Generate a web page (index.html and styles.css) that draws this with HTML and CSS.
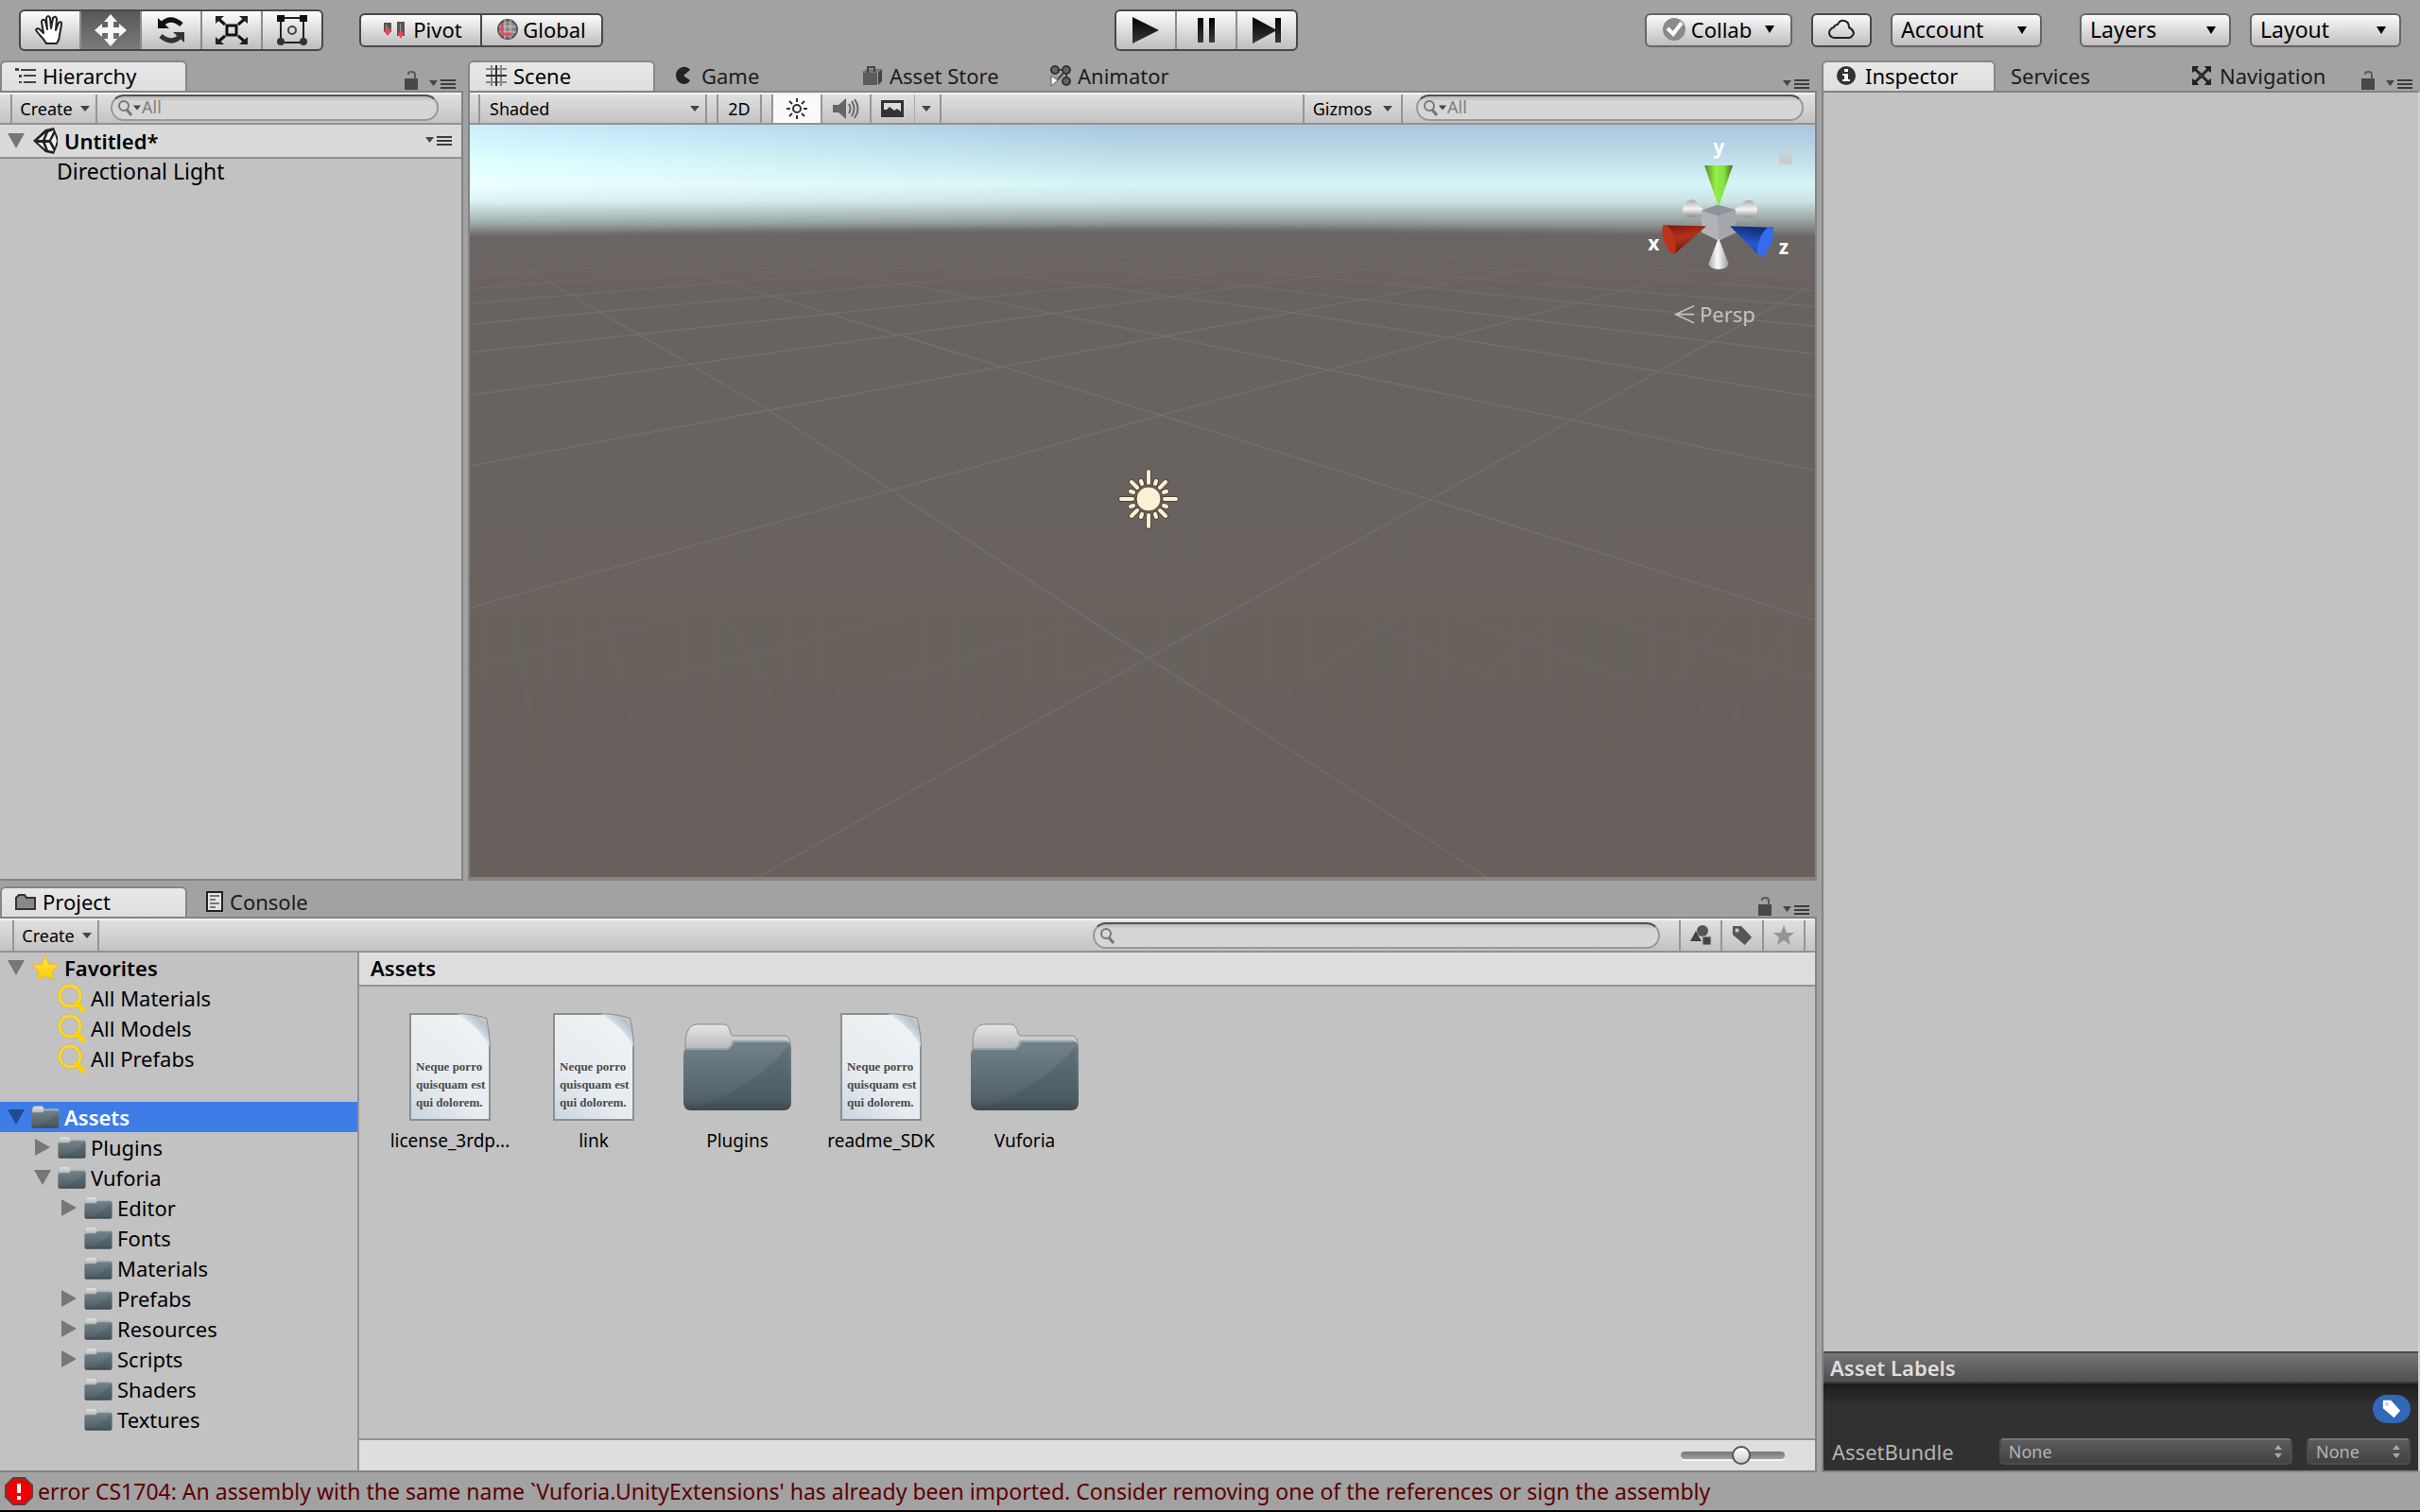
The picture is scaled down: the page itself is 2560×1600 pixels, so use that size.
FILE: index.html
```html
<!DOCTYPE html>
<html lang="en">
<head>
    <meta charset="UTF-8">
    <meta name="viewport" content="width=device-width, initial-scale=1.0">
    <title>Unity Editor</title>
    <link rel="stylesheet" href="styles.css">
</head>
<body>
    <!-- shared icons -->
    <svg class="defs" aria-hidden="true">
        <defs>
            <linearGradient id="folderFront" x1="0" y1="0" x2="0" y2="1">
                <stop offset="0" stop-color="#74838b"/>
                <stop offset="0.85" stop-color="#536067"/>
                <stop offset="1" stop-color="#3c474d"/>
            </linearGradient>
            <linearGradient id="folderBack" x1="0" y1="0" x2="0" y2="1">
                <stop offset="0" stop-color="#e6e6e6"/>
                <stop offset="0.4" stop-color="#aaaaaa"/>
            </linearGradient>
            <linearGradient id="gold" x1="0" y1="0" x2="0" y2="1">
                <stop offset="0" stop-color="#ffe245"/>
                <stop offset="1" stop-color="#ffce00"/>
            </linearGradient>
            <linearGradient id="paper" x1="0" y1="1" x2="0.6" y2="0">
                <stop offset="0" stop-color="#c9d4df"/>
                <stop offset="0.4" stop-color="#e6ebef"/>
                <stop offset="1" stop-color="#eef2f4"/>
            </linearGradient>
            <linearGradient id="curl" x1="0" y1="1" x2="1" y2="0">
                <stop offset="0.45" stop-color="#e9eef2"/>
                <stop offset="0.75" stop-color="#b4c2cd"/>
                <stop offset="1" stop-color="#d5dde3"/>
            </linearGradient>
            <linearGradient id="dark" x1="0" y1="0" x2="0" y2="1">
                <stop offset="0" stop-color="#000"/>
                <stop offset="1" stop-color="#3a3a3a"/>
            </linearGradient>
        </defs>
        <symbol id="lock" viewBox="0 0 14 20">
            <path d="M0 8h14v12H0z" fill="#474747"/>
            <path d="M4 4V3q0-2 3.500-2T11 4v5" fill="none" stroke="#5a5a5a" stroke-width="2"/>
        </symbol>
        <symbol id="menu" viewBox="0 0 28 12">
            <path d="M0 2h9L4.500 8z" fill="#474747"/>
            <path d="M12 2h16M12 6h16M12 10h16" stroke="#3c3c3c" stroke-width="2"/>
        </symbol>
        <symbol id="down" viewBox="0 0 18 16"><path d="M0 0h18L9 16z" fill="currentColor"/></symbol>
        <symbol id="right" viewBox="0 0 16 18"><path d="M0 0l16 9-16 9z" fill="currentColor"/></symbol>
        <symbol id="caret" viewBox="0 0 10 6"><path d="M0 0h10L5 6z" fill="#444"/></symbol>
        <symbol id="find" viewBox="0 0 16 18">
            <circle cx="6" cy="7" r="5" fill="none" stroke="#777" stroke-width="2"/>
            <path d="M9 11l5 6" stroke="#777" stroke-width="3"/>
        </symbol>
        <symbol id="folder" viewBox="0 0 116 94">
            <path d="M3 88V18Q5 3 14 2h30q5 0 7 10l2 2h54q6 0 7 7v67z" fill="url(#folderBack)" stroke="#8b8b8b" stroke-width="1"/>
            <path d="M1 34q0-6 5-6l41-1q4-1 6-8h54q8 1 8 8v57q0 9-8 9H9q-8 0-8-9z" fill="url(#folderFront)"/>
            <path d="M113 24v58q0 7-7 7H20q60-25 93-65z" fill="#2f4a52" opacity="0.25"/>
            <path d="M4 28h43q4-1 7-8h56" fill="none" stroke="#90a6b2" stroke-width="2"/>
        </symbol>
        <symbol id="lens" viewBox="0 0 30 30">
            <circle cx="13" cy="13" r="11" fill="none" stroke="#c79f1c" stroke-width="4" opacity="0.5"/>
            <circle cx="13" cy="13" r="11" fill="none" stroke="#ffd828" stroke-width="3"/>
            <path d="M20 21l7 7" stroke="#ffd200" stroke-width="5" stroke-linecap="round"/>
        </symbol>
        <symbol id="file" viewBox="0 0 88 116">
            <path d="M2 2h50q20 1 30 5 4 16 4 34v73H2z" fill="url(#paper)" stroke="#8a8f92" stroke-width="2"/>
            <path d="M52 2q20 1 30 5 3 13 4 30Q77 17 52 2z" fill="url(#curl)"/>
        </symbol>
        <symbol id="tag" viewBox="0 0 26 24">
            <path d="M2 1h10l12 13-8 9L2 11z" fill="currentColor"/>
            <rect class="hole" x="5" y="4" width="4" height="4"/>
        </symbol>
    </svg>

    <header class="topbar">
        <div class="top-left">
            <div class="group">
                <button class="tool" aria-label="Hand">
                    <svg width="34" height="34" viewBox="0 0 34 34"><path d="M13 31C11 27 9 25 6 22L2 17q1-3 4-1l4 4-2-12q1-4 4-1l2 9-1-12q2-4 4 0l1 11 2-11q3-3 4 1l-1 12 3-8q4-2 3 2l-2 11q0 5-3 9z" fill="#fff" stroke="#222" stroke-width="2" stroke-linejoin="round"/></svg>
                </button>
                <button class="tool active" aria-label="Move">
                    <svg width="36" height="36" viewBox="0 0 36 36"><path d="M18 1l7 8h-4v6h6v-4l8 7-8 7v-4h-6v6h4l-7 8-7-8h4v-6H9v4l-8-7 8-7v4h6V9h-4z" fill="#f6f6f6"/></svg>
                </button>
                <button class="tool" aria-label="Rotate">
                    <svg width="32" height="32" viewBox="0 0 32 32"><path d="M6 10Q15 0 27 10" fill="none" stroke="#111" stroke-width="5"/><path d="M2 3v11h12z" fill="#111"/><path d="M26 22Q17 32 5 22" fill="none" stroke="#333" stroke-width="5"/><path d="M30 29V18H18z" fill="#333"/></svg>
                </button>
                <button class="tool" aria-label="Scale">
                    <svg width="36" height="32" viewBox="0 0 36 32"><rect x="13" y="11" width="10" height="10" fill="none" stroke="#111" stroke-width="3"/><path d="M3 3l8 7M33 3l-8 7M3 29l8-7M33 29l-8-7" stroke="#111" stroke-width="3"/><path d="M1 1h9l-9 8zM35 1h-9l9 8zM1 31h9l-9-8zM35 31h-9l9-8z" fill="#222"/></svg>
                </button>
                <button class="tool" aria-label="Rect">
                    <svg width="34" height="34" viewBox="0 0 34 34"><path d="M5 4h24v26H5z" fill="none" stroke="#222" stroke-width="2"/><path d="M1 1h8v7H1zM25 1h8v7h-8z" fill="#111"/><circle cx="5" cy="29" r="4" fill="#333"/><circle cx="29" cy="29" r="4" fill="#333"/><circle cx="17" cy="17" r="4" fill="none" stroke="#444" stroke-width="2"/></svg>
                </button>
            </div>
            <div class="group small">
                <button class="pivot">
                    <svg width="24" height="20" viewBox="0 0 24 20"><path d="M1 3h8v10H1zM15 2h8v15h-8z" fill="#555"/><path d="M3 5h1v7H3zM18 4h1v9h-1z" fill="#999"/><path d="M5 7l4 5-4 5-4-5zM19 11l3 4-3 5-3-5z" fill="#e8485a"/></svg>
                    Pivot
                </button>
                <button class="global">
                    <svg width="22" height="22" viewBox="0 0 22 22"><circle cx="11" cy="11" r="10" fill="#888" stroke="#555" stroke-width="2"/><path d="M2 8h18M2 14h18M8 1v20M14 1v20" stroke="#ccc" stroke-width="1"/><path d="M5 5v11h10" fill="none" stroke="#e8485a" stroke-width="3"/></svg>
                    Global
                </button>
            </div>
        </div>
        <div class="group play">
            <button class="tool" aria-label="Play"><svg width="30" height="28" viewBox="0 0 30 28"><path d="M1 0l28 14L1 28z" fill="url(#dark)"/></svg></button>
            <button class="tool" aria-label="Pause"><svg width="20" height="28" viewBox="0 0 20 28"><path d="M1 1h6v26H1zM13 1h6v26h-6z" fill="url(#dark)"/></svg></button>
            <button class="tool" aria-label="Step"><svg width="30" height="28" viewBox="0 0 30 28"><path d="M0 0l24 13V1h6v26h-6V15L0 28z" fill="url(#dark)"/></svg></button>
        </div>
        <div class="top-right">
            <button class="pop collab">
                <svg width="24" height="24" viewBox="0 0 24 24"><circle cx="12" cy="12" r="12" fill="#8a8a8a"/><path d="M5 11l6 6 9-12" fill="none" stroke="#fff" stroke-width="4"/></svg>
                Collab
                <svg class="tri" width="10" height="8" viewBox="0 0 10 8"><path d="M0 0h10L5 8z"/></svg>
            </button>
            <button class="pop cloud" aria-label="Cloud">
                <svg width="30" height="22" viewBox="0 0 30 22"><path d="M7 20q-5-1-5-6 1-4 5-5 1-3 4-3 2-5 7-4 5 1 5 7 4 2 5 6-1 4-5 5z" fill="none" stroke="#222" stroke-width="2"/></svg>
            </button>
            <select class="pop" aria-label="Account"><option>Account</option></select>
            <select class="pop spaced" aria-label="Layers"><option>Layers</option></select>
            <select class="pop" aria-label="Layout"><option>Layout</option></select>
        </div>
    </header>

    <main class="workspace">
        <section class="panel hierarchy">
            <nav class="tabs">
                <button class="tab active">
                    <svg width="22" height="18" viewBox="0 0 22 18"><path d="M6 3h16M9 9h13M9 16h13" stroke="#444" stroke-width="2"/><path d="M0 1h4v3H0zM4 8h3v3H4zM4 15h3v2H4z" fill="#444"/></svg>
                    Hierarchy
                </button>
                <div class="tab-tools">
                    <svg width="14" height="20"><use href="#lock"/></svg>
                    <svg width="28" height="12"><use href="#menu"/></svg>
                </div>
            </nav>
            <div class="panel-body">
                <div class="toolbar">
                    <button class="bar-btn create">Create <svg width="10" height="6"><use href="#caret"/></svg></button>
                    <label class="search wide">
                        <svg width="16" height="18"><use href="#find"/></svg><svg width="8" height="6"><use href="#caret"/></svg>
                        <input type="text" placeholder="All" aria-label="Search hierarchy">
                    </label>
                </div>
                <div class="row scene-row">
                    <button class="toggle" aria-label="Collapse"><svg width="18" height="16"><use href="#down"/></svg></button>
                    <svg class="icon" width="30" height="30" viewBox="0 0 30 30"><path d="M2 15L15 3l9-2 4 10v8l-4 10-9-2z" fill="#222"/><path d="M7 14l8-7-3 7zM7 17h5l3 7zM18 6l6-2-5 10h-4zM18 25l-3-8h4l5 9zM25 8l2 7-2 7-4-7z" fill="#f4f4f4"/></svg>
                    <b>Untitled*</b>
                    <svg class="row-menu" width="28" height="12"><use href="#menu"/></svg>
                </div>
                <div class="row object">Directional Light</div>
            </div>
        </section>

        <section class="panel scene">
            <nav class="tabs">
                <button class="tab active">
                    <svg width="22" height="22" viewBox="0 0 22 22"><path d="M6 0v22M16 0v22M0 4h22M0 18h22" stroke="#888" stroke-width="2"/><path d="M11 0v22M0 11h22" stroke="#333" stroke-width="2"/></svg>
                    Scene
                </button>
                <button class="tab">
                    <svg width="22" height="20" viewBox="0 0 22 20"><path d="M17 4Q14 0 9 1 2 3 2 10t8 9q5 0 7-4l-7-5z" fill="#222"/></svg>
                    Game
                </button>
                <button class="tab">
                    <svg width="22" height="22" viewBox="0 0 22 22"><path d="M1 8h15v13H1z" fill="#5c5c5c"/><path d="M0 7l5-3h16l-4 4H0z" fill="#777"/><path d="M17 8l4-4v13l-4 4z" fill="#444"/><path d="M6 8V2h7v5" fill="none" stroke="#444" stroke-width="2"/></svg>
                    Asset Store
                </button>
                <button class="tab">
                    <svg width="22" height="22" viewBox="0 0 22 22"><path d="M5 5h12v12M17 5L8 15" fill="none" stroke="#444" stroke-width="2"/><circle cx="5" cy="5" r="4" fill="#666" stroke="#333" stroke-width="2"/><circle cx="17" cy="5" r="4" fill="#666" stroke="#333" stroke-width="2"/><circle cx="17" cy="17" r="4" fill="#666" stroke="#333" stroke-width="2"/><path d="M1 11l7 5-7 6z" fill="#fff" stroke="#555" stroke-width="1"/></svg>
                    Animator
                </button>
                <div class="tab-tools"><svg width="28" height="12"><use href="#menu"/></svg></div>
            </nav>
            <div class="panel-body">
                <div class="toolbar">
                    <select class="bar-select" aria-label="Draw mode"><option>Shaded</option></select>
                    <button class="bar-btn two-d">2D</button>
                    <button class="bar-btn square on" aria-label="Lighting">
                        <svg width="24" height="24" viewBox="-12 -12 24 24"><circle r="4" fill="none" stroke="#333" stroke-width="2"/><path d="M0-11v4M0 11V7M-11 0h4M11 0H7M-8-8l3 3M8-8L5-5M-8 8l3-3M8 8L5 5" stroke="#333" stroke-width="2"/></svg>
                    </button>
                    <button class="bar-btn square" aria-label="Audio">
                        <svg width="28" height="24" viewBox="0 0 28 24"><path d="M0 8h6l8-7v22l-8-7H0z" fill="#666"/><path d="M17 7q3 5 0 10M20 4q5 8 0 16M23 2q7 10 0 20" fill="none" stroke="#666" stroke-width="2"/></svg>
                    </button>
                    <button class="bar-btn effects" aria-label="Effects">
                        <svg width="24" height="18" viewBox="0 0 24 18"><path d="M0 0h24v18H0z" fill="#333"/><path d="M3 3h18v9l-4-3-3 2-5-4-3 3H3z" fill="#ddd"/></svg>
                        <svg class="split" width="10" height="6"><use href="#caret"/></svg>
                    </button>
                    <button class="bar-btn gizmos">Gizmos <svg width="10" height="6"><use href="#caret"/></svg></button>
                    <label class="search">
                        <svg width="16" height="18"><use href="#find"/></svg><svg width="8" height="6"><use href="#caret"/></svg>
                        <input type="text" placeholder="All" aria-label="Search scene">
                    </label>
                </div>
                <div class="viewport">
                    <svg class="world" viewBox="18 22 1538 1523" preserveAspectRatio="none">
                        <defs>
                            <linearGradient id="sky" x1="0" y1="0" x2="0" y2="1">
                                <stop offset="0" stop-color="#a9c6df"/>
                                <stop offset="0.25" stop-color="#bcd9e8"/>
                                <stop offset="0.53" stop-color="#d6f5f6"/>
                                <stop offset="0.68" stop-color="#cbe2e3"/>
                                <stop offset="0.86" stop-color="#94a09f"/>
                                <stop offset="1" stop-color="#6b6664"/>
                            </linearGradient>
                            <linearGradient id="skyLeft" x1="0" y1="0" x2="0" y2="1">
                                <stop offset="0" stop-color="#c9edff"/>
                                <stop offset="0.3" stop-color="#dcffff"/>
                                <stop offset="0.53" stop-color="#ecffff"/>
                                <stop offset="0.68" stop-color="#d9f3f3"/>
                                <stop offset="0.86" stop-color="#a3b2b1"/>
                                <stop offset="1" stop-color="#6b6664"/>
                            </linearGradient>
                            <linearGradient id="fade">
                                <stop offset="0" stop-color="#fff"/>
                                <stop offset="0.5" stop-color="#000"/>
                            </linearGradient>
                            <linearGradient id="ground" x1="0" y1="0" x2="0" y2="1">
                                <stop offset="0" stop-color="#6b6565"/>
                                <stop offset="0.1" stop-color="#696460"/>
                                <stop offset="1" stop-color="#68605a"/>
                            </linearGradient>
                            <linearGradient id="haze" x1="0" y1="0" x2="0" y2="1">
                                <stop offset="0" stop-color="#000"/>
                                <stop offset="0.12" stop-color="#fff"/>
                            </linearGradient>
                            <mask id="leftMask"><rect x="18" y="22" width="1538" height="240" fill="url(#fade)"/></mask>
                            <mask id="hazeMask" maskUnits="userSpaceOnUse" x="18" y="22" width="1538" height="1523"><rect x="18" y="260" width="1538" height="1285" fill="url(#haze)"/></mask>
                            <filter id="soft" x="-5%" y="-5%" width="110%" height="110%"><feGaussianBlur stdDeviation="3 7"/></filter>
                        </defs>
                        <rect x="18" y="240" width="1538" height="1305" fill="#6b6664"/>
                        <rect x="18" y="22" width="1538" height="228" fill="url(#sky)"/>
                        <rect x="18" y="22" width="1538" height="228" fill="url(#skyLeft)" mask="url(#leftMask)"/>
                        <path d="M-60 252Q787 212 1640 252V1640H-60z" fill="url(#ground)" filter="url(#soft)"/>
                        <g class="grid-lines" mask="url(#hazeMask)">
                            <path d="M10 240L360 600 795 1103 1181 1546M347 1546L1556 343M180 270L808 610 1556 1025M18 1000L808 610 1520 270M390 300L813 450 1556 722M18 713L813 450 1300 290M550 305L970 405 1556 573M18 570L1180 280"/>
                            <path d="M600 283L1556 486M18 483L950 306M700 280L1556 430M18 426L800 296M800 280L1556 390M18 384L700 284M900 276L1556 358M18 354L640 276M900 264L1556 330M18 328L560 262"/>
                            <path d="M18 900L500 700M18 1120L760 800M18 1250L900 830M18 1400L850 960M60 1546L1000 960M640 1546L1100 990M60 950L122 1546M160 940L250 1546M290 950L480 1546M600 1200L780 1546M1556 1150L950 820M1556 1280L900 860M1556 1430L960 960M920 1546L1280 980M1210 1546L1480 960M1350 1546L1540 1000" opacity="0.2"/>
                        </g>
                    </svg>
                    <svg class="sun" width="66" height="66" viewBox="-33 -33 66 66">
                        <g fill="none" stroke-linecap="round">
                            <path d="M0-29v12M0 29V17M-29 0h12M29 0H17M-18-18l6 6M18-18l-6 6M-18 18l6-6M18 18l-6-6M-8-19l1 3M8-19l-1 3M-8 19l1-3M8 19l-1-3M-19-8l3 1M19-8l-3 1M-19 8l3-1M19 8l-3-1" stroke="#4d463f" stroke-width="6"/>
                            <path d="M0-29v12M0 29V17M-29 0h12M29 0H17M-18-18l6 6M18-18l-6 6M-18 18l6-6M18 18l-6-6M-8-19l1 3M8-19l-1 3M-8 19l1-3M8 19l-1-3M-19-8l3 1M19-8l-3 1M-19 8l3-1M19 8l-3-1" stroke="#fdf0d3" stroke-width="4"/>
                        </g>
                        <circle r="13" fill="#fdf0d3" stroke="#4d463f" stroke-width="1"/>
                    </svg>
                    <svg class="axis" width="160" height="200" viewBox="180 75 480 600">
                        <defs>
                            <linearGradient id="green"><stop offset="0" stop-color="#4f8f22"/><stop offset="0.4" stop-color="#95f04a"/><stop offset="0.7" stop-color="#86e03e"/><stop offset="1" stop-color="#3d6d1c"/></linearGradient>
                            <linearGradient id="white"><stop offset="0" stop-color="#aaa"/><stop offset="0.45" stop-color="#fafafa"/><stop offset="1" stop-color="#999"/></linearGradient>
                            <linearGradient id="whiteV" x1="0" y1="0" x2="0" y2="1"><stop offset="0" stop-color="#aaa"/><stop offset="0.5" stop-color="#f4f4f6"/><stop offset="1" stop-color="#888"/></linearGradient>
                            <linearGradient id="red" x1="0" y1="0" x2="0.3" y2="1"><stop offset="0" stop-color="#701c10"/><stop offset="0.5" stop-color="#b43019"/><stop offset="1" stop-color="#6a1a0e"/></linearGradient>
                            <linearGradient id="blue" x1="0.3" y1="0" x2="0" y2="1"><stop offset="0" stop-color="#132f7c"/><stop offset="0.5" stop-color="#2858d2"/><stop offset="1" stop-color="#122a6c"/></linearGradient>
                        </defs>
                        <path d="M364 304L340 277Q310 264 300 305q2 22 22 26l42-5z" fill="url(#whiteV)"/>
                        <path d="M466 304l32-26q30-12 39 27-2 22-22 29l-49-9z" fill="url(#whiteV)"/>
                        <path d="M360 308l51-18 57 16v72l-54 26-54-26z" fill="#b2b3b7"/>
                        <path d="M360 308l51-18 57 16-54 20z" fill="#8f939b"/>
                        <path d="M411 326l57-20v72l-54 26z" fill="#a5a6aa"/>
                        <path d="M369 165h90l-43 125h-4z" fill="url(#green)"/>
                        <path d="M412 400h4l30 78q-6 17-32 17t-32-17z" fill="url(#white)"/>
                        <path d="M238 355l137 3-100 88z" fill="url(#red)"/>
                        <ellipse cx="257" cy="400" rx="17" ry="48" transform="rotate(-18 257 400)" fill="#bd321b"/>
                        <path d="M450 358l138 4-42 92z" fill="url(#blue)"/>
                        <ellipse cx="562" cy="408" rx="20" ry="50" transform="rotate(21 562 408)" fill="#356bec"/>
                        <path d="M606 131h42v31h-42z" fill="#c9cdcd"/>
                        <path d="M615 122q2-12 12-12 12 1 12 12v12" fill="none" stroke="#c9cdcd" stroke-width="5"/>
                        <path d="M336 611l-58 27 58 27M280 638h56" fill="none" stroke="#c4c2c0" stroke-width="5"/>
                        <g class="axis-name">
                            <text x="397" y="128">y</text>
                            <text x="190" y="434">x</text>
                            <text x="605" y="446">z</text>
                        </g>
                        <text class="persp" x="354" y="662">Persp</text>
                    </svg>
                </div>
            </div>
        </section>

        <section class="panel project">
            <nav class="tabs">
                <button class="tab active">
                    <svg width="22" height="18" viewBox="0 0 22 18"><path d="M1 17V5l3-3h6l2 3h9v12z" fill="#888" stroke="#333" stroke-width="2"/></svg>
                    Project
                </button>
                <button class="tab">
                    <svg width="18" height="22" viewBox="0 0 18 22"><path d="M1 1h16v20H1z" fill="#e3e3e3" stroke="#222" stroke-width="2"/><path d="M4 5h10M4 9h6M4 13h10M4 17h6" stroke="#777" stroke-width="2"/></svg>
                    Console
                </button>
                <div class="tab-tools">
                    <svg width="14" height="20"><use href="#lock"/></svg>
                    <svg width="28" height="12"><use href="#menu"/></svg>
                </div>
            </nav>
            <div class="panel-body">
                <div class="toolbar">
                    <button class="bar-btn create">Create <svg width="10" height="6"><use href="#caret"/></svg></button>
                    <label class="search">
                        <svg width="16" height="18"><use href="#find"/></svg>
                        <input type="text" aria-label="Search project">
                    </label>
                    <div class="filters">
                        <button class="bar-btn" aria-label="Filter by type"><svg width="24" height="22" viewBox="0 0 24 22"><circle cx="14" cy="6" r="6" fill="#555"/><path d="M7 6l6 11H1z" fill="#444"/><path d="M14 12h9v9h-9z" fill="#444" stroke="#bbb" stroke-width="1"/></svg></button>
                        <button class="bar-btn tag-btn" aria-label="Filter by label"><svg width="24" height="22"><use href="#tag"/></svg></button>
                        <button class="bar-btn" aria-label="Save search"><svg width="22" height="22" viewBox="0 0 22 22"><path d="M11 0l3 8h8l-6 5 2 8-7-5-7 5 2-8-6-5h8z" fill="#959595"/></svg></button>
                    </div>
                </div>
                <div class="browser">
                    <div class="tree">
                        <div class="row"><button class="toggle" aria-label="Collapse"><svg width="18" height="16"><use href="#down"/></svg></button><svg class="icon" width="30" height="28" viewBox="0 0 30 28"><path d="M15 1l4 9 10 1-7 7 2 9-9-4-9 4 2-9-7-7 10-1z" fill="url(#gold)" stroke="#e2b93a" stroke-width="1"/></svg><b>Favorites</b></div>
                        <div class="row level1"><span class="toggle"></span><svg class="icon" width="30" height="30"><use href="#lens"/></svg>All Materials</div>
                        <div class="row level1"><span class="toggle"></span><svg class="icon" width="30" height="30"><use href="#lens"/></svg>All Models</div>
                        <div class="row level1"><span class="toggle"></span><svg class="icon" width="30" height="30"><use href="#lens"/></svg>All Prefabs</div>
                        <div class="row selected"><button class="toggle" aria-label="Collapse"><svg width="18" height="16"><use href="#down"/></svg></button><svg class="icon" width="30" height="24"><use href="#folder"/></svg><b>Assets</b></div>
                        <div class="row level1"><button class="toggle" aria-label="Expand"><svg width="16" height="18"><use href="#right"/></svg></button><svg class="icon" width="30" height="24"><use href="#folder"/></svg>Plugins</div>
                        <div class="row level1"><button class="toggle" aria-label="Collapse"><svg width="18" height="16"><use href="#down"/></svg></button><svg class="icon" width="30" height="24"><use href="#folder"/></svg>Vuforia</div>
                        <div class="row level2"><button class="toggle" aria-label="Expand"><svg width="16" height="18"><use href="#right"/></svg></button><svg class="icon" width="30" height="24"><use href="#folder"/></svg>Editor</div>
                        <div class="row level2"><span class="toggle"></span><svg class="icon" width="30" height="24"><use href="#folder"/></svg>Fonts</div>
                        <div class="row level2"><span class="toggle"></span><svg class="icon" width="30" height="24"><use href="#folder"/></svg>Materials</div>
                        <div class="row level2"><button class="toggle" aria-label="Expand"><svg width="16" height="18"><use href="#right"/></svg></button><svg class="icon" width="30" height="24"><use href="#folder"/></svg>Prefabs</div>
                        <div class="row level2"><button class="toggle" aria-label="Expand"><svg width="16" height="18"><use href="#right"/></svg></button><svg class="icon" width="30" height="24"><use href="#folder"/></svg>Resources</div>
                        <div class="row level2"><button class="toggle" aria-label="Expand"><svg width="16" height="18"><use href="#right"/></svg></button><svg class="icon" width="30" height="24"><use href="#folder"/></svg>Scripts</div>
                        <div class="row level2"><span class="toggle"></span><svg class="icon" width="30" height="24"><use href="#folder"/></svg>Shaders</div>
                        <div class="row level2"><span class="toggle"></span><svg class="icon" width="30" height="24"><use href="#folder"/></svg>Textures</div>
                    </div>
                    <div class="contents">
                        <div class="crumbs"><b>Assets</b></div>
                        <div class="files">
                            <div class="file"><div class="doc"><svg width="88" height="116"><use href="#file"/></svg><p>Neque porro<br>quisquam est<br>qui dolorem.</p></div><span>license_3rdp...</span></div>
                            <div class="file"><div class="doc"><svg width="88" height="116"><use href="#file"/></svg><p>Neque porro<br>quisquam est<br>qui dolorem.</p></div><span>link</span></div>
                            <div class="file"><svg width="116" height="94"><use href="#folder"/></svg><span>Plugins</span></div>
                            <div class="file"><div class="doc"><svg width="88" height="116"><use href="#file"/></svg><p>Neque porro<br>quisquam est<br>qui dolorem.</p></div><span>readme_SDK</span></div>
                            <div class="file"><svg width="116" height="94"><use href="#folder"/></svg><span>Vuforia</span></div>
                        </div>
                        <div class="files-foot"><input class="zoom" type="range" min="0" max="100" value="60" aria-label="Icon size"></div>
                    </div>
                </div>
            </div>
        </section>

        <section class="panel inspector">
            <nav class="tabs">
                <button class="tab active">
                    <svg width="22" height="22" viewBox="0 0 22 22"><circle cx="11" cy="11" r="10" fill="#333"/><path d="M9 4h4v3H9zM7 9h6v6h2v2H7v-2h2v-4H7z" fill="#fff"/></svg>
                    Inspector
                </button>
                <button class="tab">Services</button>
                <button class="tab nav-tab">
                    <svg width="20" height="20" viewBox="0 0 20 20"><path d="M0 0h7L5 3l4 4-2 2-4-4-3 2zM20 0v7l-3-2-4 4-2-2 4-4-2-3zM0 20v-7l3 2 4-4 2 2-4 4 2 3zM20 20h-7l2-3-4-4 2-2 4 4 3-2z" fill="#222"/><path d="M7 7h6v6H7z" fill="#333"/></svg>
                    Navigation
                </button>
                <div class="tab-tools">
                    <svg width="14" height="20"><use href="#lock"/></svg>
                    <svg width="28" height="12"><use href="#menu"/></svg>
                </div>
            </nav>
            <div class="panel-body">
                <div class="labels-head"><b>Asset Labels</b></div>
                <div class="labels-body">
                    <button class="badge" aria-label="Labels"><svg width="22" height="20"><use href="#tag"/></svg></button>
                    <div class="bundle">
                        <label for="bundle">AssetBundle</label>
                        <select id="bundle"><option>None</option></select>
                        <select class="variant" aria-label="Variant"><option>None</option></select>
                    </div>
                </div>
            </div>
        </section>
    </main>

    <footer class="status">
        <svg width="30" height="30" viewBox="0 0 30 30"><path d="M9 1h12l8 8v12l-8 8H9l-8-8V9z" fill="#f00000" stroke="#6b3a3a" stroke-width="2"/><path d="M13 7h4v10h-4zM13 20h4v4h-4z" fill="#fff"/></svg>
        error CS1704: An assembly with the same name `Vuforia.UnityExtensions' has already been imported. Consider removing one of the references or sign the assembly
    </footer>
</body>
</html>
```
FILE: styles.css
```css
*, *::before, *::after {
    box-sizing: border-box;
}
body {
    margin: 0;
    height: 100vh;
    display: flex;
    flex-direction: column;
    background: #a2a2a2;
    color: #000;
    font-family: "Noto Sans", "Open Sans", sans-serif;
    font-size: 22px;
    line-height: 32px;
    overflow: hidden;
}
button, input, select {
    font: inherit;
    color: inherit;
    margin: 0;
    padding: 0;
    border: 0;
    border-radius: 0;
    background: none;
    outline: none;
}
select {
    appearance: none;
}
svg {
    display: block;
    flex: none;
}
b {
    font-weight: 600;
}
.defs {
    position: absolute;
    width: 0;
    height: 0;
}

/* top toolbar */
.topbar {
    height: 64px;
    flex: none;
    display: grid;
    grid-template-columns: 1180fr auto 1189fr;
    align-items: center;
}
.top-left, .top-right, .group {
    display: flex;
    align-items: center;
}
.top-left {
    gap: 38px;
    padding-left: 20px;
}
.top-right {
    justify-content: flex-end;
    gap: 20px;
    padding-right: 20px;
}
.group {
    height: 44px;
    border: 2px solid #484848;
    border-radius: 6px;
    background: linear-gradient(#fdfdfd, #bfbdbe);
    overflow: hidden;
}
.group.small {
    height: 36px;
}
.tool {
    width: 64px;
    height: 40px;
    display: flex;
    align-items: center;
    justify-content: center;
    border-right: 2px solid #8c8c8c;
}
.tool:last-child {
    width: 62px;
    border-right: 0;
}
.tool.active {
    background: linear-gradient(#585858, #7a7a7a);
}
.pivot, .global {
    height: 32px;
    display: flex;
    align-items: center;
    gap: 5px;
    justify-content: center;
    width: 126px;
    padding-bottom: 2px;
}
.pivot {
    width: 128px;
    gap: 8px;
    padding-left: 4px;
    border-right: 2px solid #484848;
}
.pop {
    height: 36px;
    width: 160px;
    border: 2px solid #666;
    border-radius: 6px;
    background: linear-gradient(#fbfbfb, #bfbdbe);
    padding: 0 8px 2px;
    line-height: 30px;
}
select.pop {
    padding-left: 9px;
    background: url("data:image/svg+xml,%3Csvg xmlns='http://www.w3.org/2000/svg' width='10' height='8'%3E%3Cpath d='M0 0h10L5 8z'/%3E%3C/svg%3E") no-repeat right 14px center, linear-gradient(#fbfbfb, #bfbdbe);
    font-size: 23px;
}
.pop.spaced {
    margin-left: 20px;
}
.collab, .cloud {
    display: flex;
    align-items: center;
    justify-content: center;
    gap: 6px;
}
.collab {
    width: 156px;
}
.collab .tri {
    margin-left: 8px;
}
.cloud {
    width: 64px;
    border-color: #484848;
}

/* docked panels */
.workspace {
    flex: 1;
    min-height: 0;
    display: grid;
    grid-template-columns: minmax(0, 490fr) minmax(0, 1427fr) minmax(0, 633fr);
    grid-template-rows: minmax(0, 868fr) minmax(0, 626fr);
    column-gap: 5px;
}
.panel {
    display: flex;
    flex-direction: column;
    min-width: 0;
    min-height: 0;
}
.project {
    grid-column: 1 / 3;
    grid-row: 2;
    padding-top: 6px;
}
.inspector {
    grid-column: 3;
    grid-row: 1 / 3;
}
.tabs {
    height: 32px;
    flex: none;
    display: flex;
    gap: 1px;
}
.tab {
    width: 198px;
    display: flex;
    align-items: center;
    gap: 7px;
    padding: 0 17px 2px;
    color: #1c1c1c;
    line-height: 28px;
    white-space: nowrap;
    border: 2px solid transparent;
    border-bottom: 0;
}
.tab.active {
    color: #000;
    border-color: #868686;
    border-radius: 6px 6px 0 0;
    background: linear-gradient(#e8e8e8, #dedede);
}
.hierarchy .tab.active, .project .tab.active {
    padding-left: 14px;
}
.tab-tools {
    margin-left: auto;
    display: flex;
    align-items: flex-end;
    gap: 12px;
    padding: 0 8px 1px 0;
}
.panel-body {
    flex: 1;
    min-height: 0;
    display: flex;
    flex-direction: column;
    border: 2px solid #838383;
    background: #c2c2c2;
}
.hierarchy .panel-body, .project .panel-body {
    border-left: 0;
}
.toolbar {
    height: 34px;
    flex: none;
    display: flex;
    align-items: stretch;
    padding-left: 11px;
    border-top: 2px solid #f2f2f2;
    border-bottom: 2px solid #929292;
    background: linear-gradient(#e0e0e0, #c3c3c3);
    font-size: 18px;
    line-height: 30px;
}
.project .toolbar {
    height: 36px;
    padding-left: 13px;
}
.bar-btn {
    display: flex;
    align-items: center;
    justify-content: center;
    border: 2px solid #959595;
    border-width: 0 2px;
}
.create {
    width: 92px;
    gap: 8px;
    padding-left: 2px;
}
.bar-btn + .bar-btn {
    margin-left: -2px;
}
.search {
    display: flex;
    align-items: center;
    height: 28px;
    width: 410px;
    margin-right: 12px;
    padding-left: 6px;
    border: 2px solid #999;
    border-top-color: #505050;
    border-radius: 14px;
    background: linear-gradient(#b9b9b9, #d6d6d6 5px);
    color: #777;
}
.search.wide {
    flex: 1;
    margin: 0 24px 0 14px;
}
.search input {
    flex: 1;
    min-width: 0;
    height: 24px;
    padding: 0 0 2px 1px;
}
.search input::placeholder {
    color: #808080;
    opacity: 1;
}
.bar-select {
    width: 242px;
    padding-left: 10px;
    border: 2px solid #959595;
    border-width: 0 2px;
    background: url("data:image/svg+xml,%3Csvg xmlns='http://www.w3.org/2000/svg' width='10' height='6'%3E%3Cpath d='M0 0h10L5 6z' fill='%23444'/%3E%3C/svg%3E") no-repeat right 6px center;
}
.scene .toolbar {
    padding-left: 9px;
}
.bar-btn.two-d {
    width: 48px;
    margin: 0 10px;
}
.square, .bar-btn + .square.on {
    width: 54px;
    margin-left: 0;
}
.square.on {
    background: #fafafa;
}
.effects {
    width: 76px;
}
.split {
    box-sizing: content-box;
    margin-left: 11px;
    padding: 12px 0 12px 7px;
    border-left: 1px solid #aaa;
}
.bar-btn.gizmos {
    width: 106px;
    gap: 12px;
    margin: 0 14px 0 auto;
}

/* trees */
.row {
    height: 32px;
    display: flex;
    align-items: center;
    padding-left: 8px;
    white-space: nowrap;
}
.toggle {
    width: 18px;
    margin-right: 7px;
    display: flex;
    justify-content: center;
    color: #777;
}
.icon {
    margin-right: 5px;
}
.level1 {
    padding-left: 36px;
}
.level2 {
    padding-left: 64px;
}
.scene-row {
    height: 36px;
    flex: none;
    background: #dadada;
    border-bottom: 2px solid #929292;
}
.row-menu {
    margin: 0 10px 0 auto;
}
.object {
    height: 26px;
    padding-left: 60px;
    font-size: 23px;
}
.selected {
    margin-top: 30px;
    background: #3e7de7;
    color: #fff;
}
.selected .toggle {
    color: #234b93;
}

/* scene view */
.viewport {
    position: relative;
    flex: 1;
    min-height: 0;
    border-bottom: 2px solid #838383;
}
.world {
    width: 100%;
    height: 100%;
}
.grid-lines path {
    fill: none;
    stroke: #8b9291;
    stroke-width: 1;
    stroke-opacity: 0.38;
    vector-effect: non-scaling-stroke;
}
.sun {
    position: absolute;
    left: 50%;
    top: 50%;
    margin: -35px 0 0 -27px;
}
.axis {
    position: absolute;
    top: 13px;
    right: 20px;
}
.axis-name {
    fill: #fff;
    font-size: 63px;
    font-weight: 700;
}
.persp {
    fill: #c4c2c0;
    font-size: 66px;
}

/* project browser */
.project .search {
    width: 600px;
    margin: 2px 20px 0 auto;
}
.filters {
    display: flex;
    margin-right: 10px;
}
.filters .bar-btn {
    width: 46px;
}
.tag-btn {
    color: #555;
}
.hole {
    fill: #ccc;
}
.browser {
    flex: 1;
    min-height: 0;
    display: flex;
}
.tree {
    width: 380px;
    flex: none;
    border-right: 2px solid #929292;
}
.contents {
    flex: 1;
    min-width: 0;
    display: flex;
    flex-direction: column;
}
.crumbs {
    height: 36px;
    flex: none;
    padding-left: 12px;
    border-bottom: 2px solid #929292;
    background: #dddddd;
}
.files {
    flex: 1;
    display: flex;
    align-items: flex-start;
    padding: 23px 20px;
}
.file {
    width: 152px;
    height: 156px;
    display: flex;
    flex-direction: column;
    align-items: center;
    font-size: 19px;
}
.file > svg, .doc {
    margin: auto 0;
}
.doc {
    position: relative;
}
.doc p {
    position: absolute;
    left: 8px;
    top: 48px;
    margin: 0;
    color: #4a4a4a;
    font: bold 13px/19px "Liberation Serif", serif;
    white-space: nowrap;
}
.files-foot {
    height: 34px;
    flex: none;
    display: flex;
    align-items: center;
    justify-content: flex-end;
    padding-right: 32px;
    border-top: 2px solid #929292;
    background: #dedede;
}
.zoom {
    appearance: none;
    width: 110px;
    height: 8px;
    border-radius: 4px;
    background: linear-gradient(#777, #a0a0a0);
    box-shadow: 0 2px 0 #f4f4f4;
}
.zoom::-webkit-slider-thumb {
    appearance: none;
    width: 20px;
    height: 20px;
    border: 2px solid #555;
    border-radius: 50%;
    background: linear-gradient(#fff, #ccc);
}

/* inspector */
.inspector .tab {
    width: 184px;
    padding: 0 13px 2px;
    gap: 9px;
}
.inspector .nav-tab {
    width: auto;
    padding: 0 0 2px 20px;
}
.inspector .panel-body {
    justify-content: flex-end;
    border-right-color: #d0d0d0;
}
.labels-head {
    height: 34px;
    padding-left: 7px;
    border-top: 2px solid #4a4a4a;
    border-bottom: 2px solid #3c3c3c;
    background: linear-gradient(#757575, #505050);
    color: #dedede;
    line-height: 30px;
}
.labels-body {
    padding: 12px 8px 6px;
    background: linear-gradient(#1d1d1d, #313131 24px);
    color: #b4b4b4;
}
.badge {
    width: 40px;
    height: 30px;
    margin: 0 0 16px auto;
    display: flex;
    align-items: center;
    justify-content: center;
    border-radius: 15px;
    background: #3168b8;
    color: #fff;
}
.badge .hole {
    fill: #3168b8;
}
.bundle {
    display: flex;
    align-items: center;
    height: 28px;
}
.bundle label {
    width: 29%;
    padding-left: 1px;
    line-height: 28px;
}
.bundle select {
    flex: 1;
    min-width: 0;
    height: 28px;
    padding: 0 0 2px 8px;
    border: 2px solid #4c4c4c;
    border-top-color: #777;
    border-radius: 5px;
    background: url("data:image/svg+xml,%3Csvg xmlns='http://www.w3.org/2000/svg' width='10' height='16'%3E%3Cpath d='M1 6h8L5 1zM1 10h8l-4 5z' fill='%23aaa'/%3E%3C/svg%3E") no-repeat right 8px center, linear-gradient(#5c5c5c, #424242);
    font-size: 18px;
    line-height: 24px;
}
.bundle .variant {
    flex: none;
    width: 110px;
    margin-left: 15px;
}

/* status line */
.status {
    height: 42px;
    flex: none;
    display: flex;
    align-items: center;
    gap: 5px;
    padding-left: 5px;
    border-bottom: 2px solid #000;
    color: #5c0000;
    font-size: 23px;
    white-space: nowrap;
}
```
